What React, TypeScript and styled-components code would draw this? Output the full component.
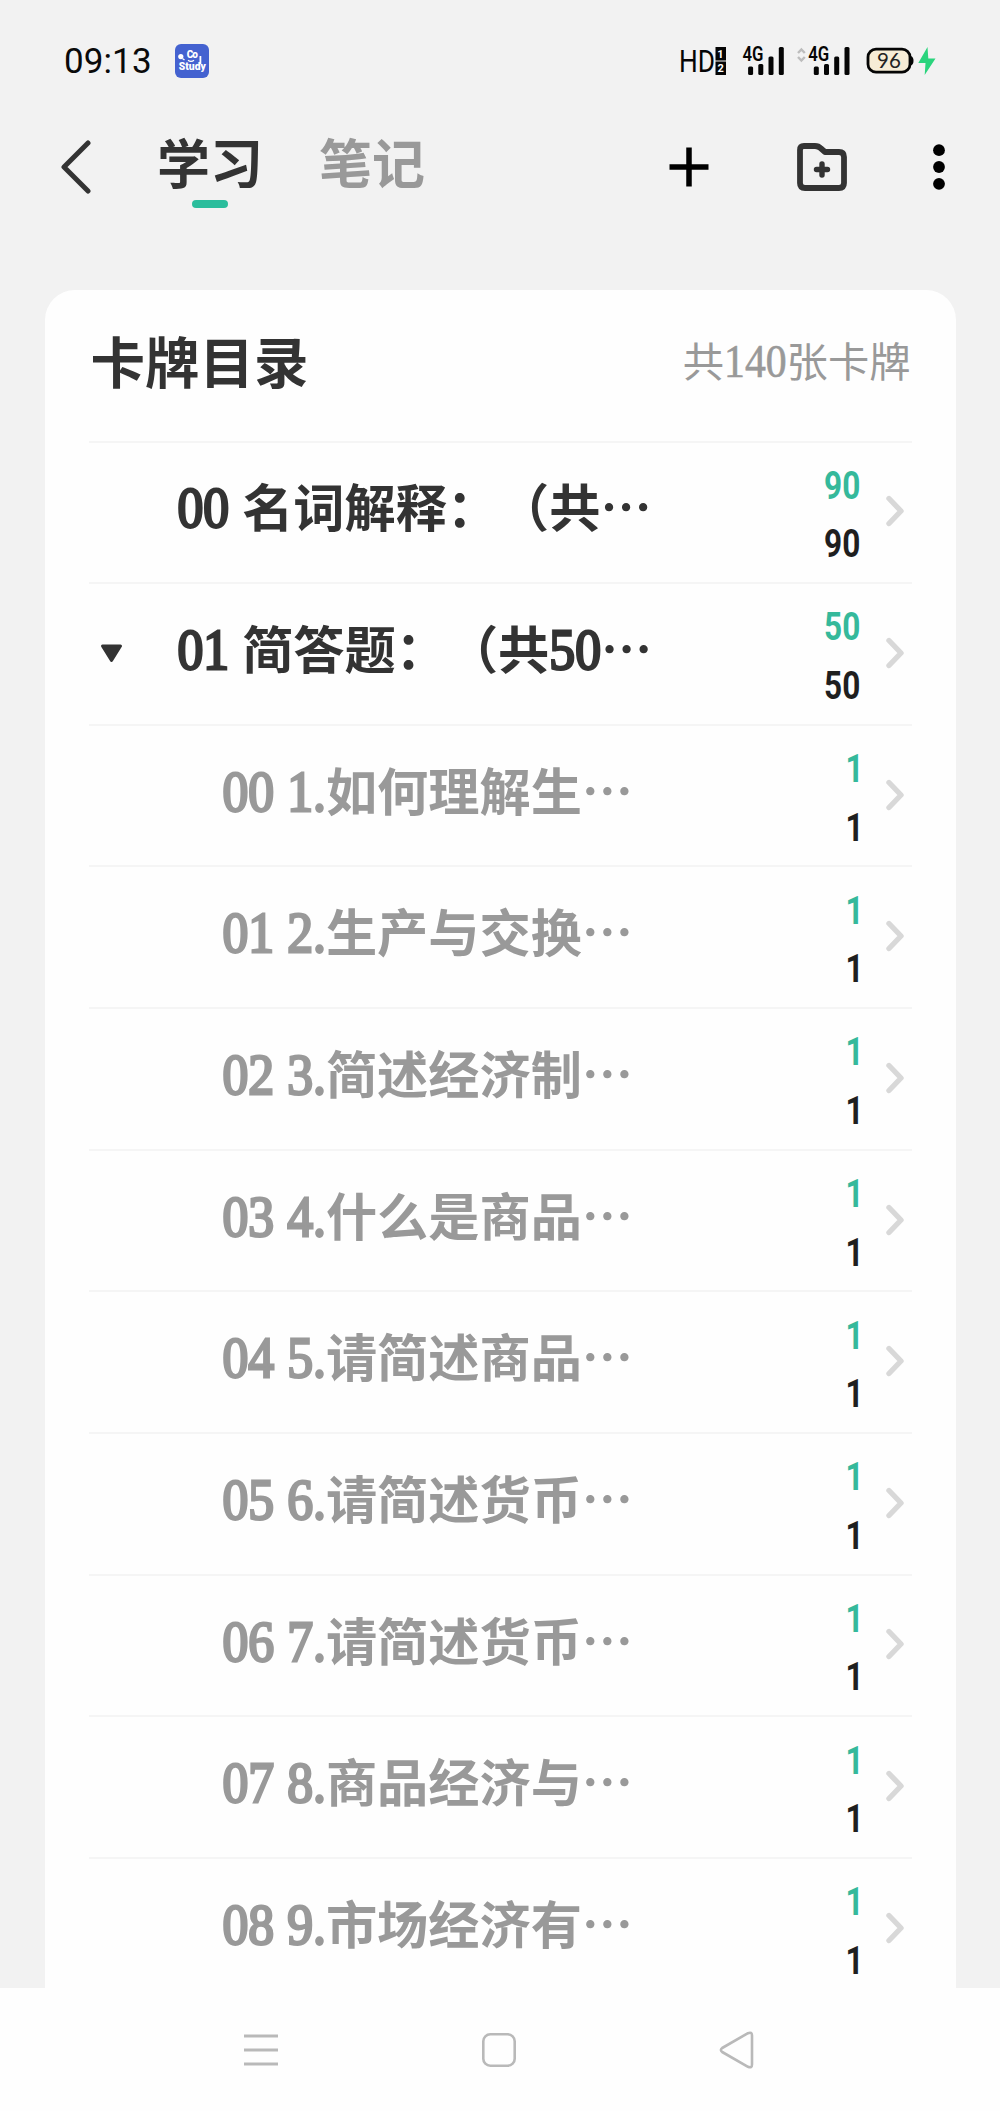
import React from "react";
import styled, { createGlobalStyle } from "styled-components";

const CJK = `"Noto Sans CJK SC", sans-serif`;

const GlobalStyle = createGlobalStyle`
  *, *::before, *::after { box-sizing: border-box; }
  body { margin: 0; background: #f2f2f2; }
`;

const Screen = styled.div`
  width: 1000px;
  height: 2111px;
  display: flex;
  flex-direction: column;
  overflow: hidden;
  background: #f2f2f2;
  font-family: ${CJK};
  text-spacing-trim: space-all;
  color: #333;
`;

const StatusBar = styled.div`
  flex: none;
  height: 122px;
  padding: 0 64px 0 64px;
  display: flex;
  align-items: center;
`;

const Clock = styled.span`
  width: 111px;
  font: 400 35px/1 Roboto, sans-serif;
  letter-spacing: 0.1px;
  color: #0a0a0a;
`;

const StatusIcons = styled.svg`
  display: block;
  margin-left: auto;
  overflow: visible;
`;

const Header = styled.header`
  flex: none;
  height: 168px;
  padding: 8px 55px 0 61px;
  display: flex;
  align-items: flex-start;
`;

const IconButton = styled.button<{ $w: number; $gap?: number }>`
  width: ${(p) => p.$w}px;
  height: 74px;
  margin: 0 0 0 ${(p) => p.$gap ?? 0}px;
  padding: 0;
  border: 0;
  background: none;
  display: flex;
  align-items: center;
  justify-content: center;
`;

const Tabs = styled.nav`
  margin-left: 65px;
  margin-right: auto;
  display: flex;
  gap: 56px;
`;

const Tab = styled.div<{ $active?: boolean }>`
  display: flex;
  flex-direction: column;
  align-items: center;
  font-size: 53px;
  font-weight: 700;
  line-height: 62px;
  color: ${(p) => (p.$active ? "#333" : "#999")};

  &::after {
    content: "";
    width: 36px;
    height: 8px;
    margin-top: 8px;
    border-radius: 4px;
    background: ${(p) => (p.$active ? "#2bbd9c" : "transparent")};
  }
`;

const Card = styled.main`
  flex: none;
  width: 911px;
  height: 1698px;
  margin-left: 44.5px;
  padding: 0 44px;
  overflow: hidden;
  border-radius: 30px 30px 0 0;
  background: #fefefe;
`;

const CardHeader = styled.div`
  height: 150.5px;
  padding: 0 1px 10px 2px;
  display: flex;
  align-items: center;
  justify-content: space-between;
`;

const CardTitle = styled.h1`
  margin: 0;
  font-size: 54.5px;
  font-weight: 700;
  line-height: 1;
`;

const CardTotal = styled.span`
  padding-top: 4px;
  font-size: 41.3px;
  line-height: 1;
  color: #999;
`;

const Latin = styled.span<{ $bold?: boolean }>`
  display: inline-block;
  font-family: "Liberation Serif", serif;
  font-size: 1.01em;
  font-weight: 400;
  line-height: 1;
  white-space: pre;
  transform: scaleY(1.12);
  transform-origin: 0 83.7%;
  -webkit-text-stroke: ${(p) => (p.$bold ? "2.5px currentColor" : "0.6px currentColor")};
`;

const Row = styled.div`
  height: 141.65px;
  border-top: 2px solid #f5f5f5;
  display: flex;
  align-items: center;
`;

const Toggle = styled.div`
  width: 46px;
  flex: none;
  display: flex;
  justify-content: center;
`;

const RowTitle = styled.div<{ $nested?: boolean }>`
  flex: 1;
  margin-left: ${(p) => (p.$nested ? 88 : 43)}px;
  padding-bottom: 13px;
  font-size: 51.2px;
  font-weight: 700;
  line-height: 60px;
  white-space: nowrap;
  color: ${(p) => (p.$nested ? "#999" : "#333")};
`;

const Counts = styled.div`
  display: flex;
  flex-direction: column;
  align-items: flex-end;
  padding-top: 6px;
  margin-right: 24px;
`;

const Count = styled.span<{ $accent?: boolean; $single?: boolean }>`
  font: 700 39.5px/58.5px Roboto, sans-serif;
  margin-right: ${(p) => (p.$single ? -3 : 0)}px;
  transform: scaleX(0.8);
  transform-origin: right center;
  color: ${(p) => (p.$accent ? "#35b99b" : "#1f1f1f")};
`;

const Chevron = styled.svg`
  display: block;
  flex: none;
  margin: 0 6px 2px 0;
`;

const NavBar = styled.footer`
  flex: none;
  height: 123px;
  padding: 0 246px 0 244px;
  display: flex;
  align-items: center;
  justify-content: space-between;
  background: #fefefe;
`;

type Entry = { title: string; count: number; nested?: boolean; open?: boolean };

const entries: Entry[] = [
  { title: "00 名词解释：（共…", count: 90 },
  { title: "01 简答题：（共50…", count: 50, open: true },
  { title: "00 1.如何理解生…", count: 1, nested: true },
  { title: "01 2.生产与交换…", count: 1, nested: true },
  { title: "02 3.简述经济制…", count: 1, nested: true },
  { title: "03 4.什么是商品…", count: 1, nested: true },
  { title: "04 5.请简述商品…", count: 1, nested: true },
  { title: "05 6.请简述货币…", count: 1, nested: true },
  { title: "06 7.请简述货币…", count: 1, nested: true },
  { title: "07 8.商品经济与…", count: 1, nested: true },
  { title: "08 9.市场经济有…", count: 1, nested: true },
];

/* Digits and ASCII punctuation use the serif face, everything else the CJK one. */
function MixedText({ text, bold }: { text: string; bold?: boolean }) {
  return (
    <>
      {text.split(/([0-9. ]+)/).map((part, i) =>
        i % 2 ? (
          <Latin key={i} $bold={bold}>
            {part}
          </Latin>
        ) : (
          part
        )
      )}
    </>
  );
}

function AppBadge() {
  return (
    <svg width="34" height="34" viewBox="0 0 34 34">
      <rect width="34" height="34" rx="6" fill="#4462d0" />
      <g fill="#fff" fontFamily="Roboto, sans-serif" fontWeight="900">
        <text x="11.8" y="14.4" fontSize="10" textLength="11">Co</text>
        <text x="3.8" y="26" fontSize="11.5" textLength="27" lengthAdjust="spacingAndGlyphs">Study</text>
      </g>
      <circle cx="5.8" cy="12.6" r="2.6" fill="#fff" />
      <path d="M7.5 14.5l2 1.5M13 16.3q3 2.2 6 0" stroke="#fff" strokeWidth="1.4" fill="none" />
      <path d="M25.4 12v8" stroke="#fff" strokeWidth="1.8" />
    </svg>
  );
}

function Signal({ x }: { x: number }) {
  return (
    <g transform={`translate(${x} 0)`} fill="#050505">
      <text x="0" y="17.4" fontFamily="Roboto, sans-serif" fontWeight="600" fontSize="19.5" textLength="21" lengthAdjust="spacingAndGlyphs">
        4G
      </text>
      <rect x="5.6" y="22.5" width="5" height="8.5" rx="1.5" />
      <rect x="15.8" y="20" width="5" height="11" rx="1.5" />
      <rect x="26" y="12.5" width="5" height="18.5" rx="1.5" />
      <rect x="36.3" y="3" width="5" height="28" rx="1.5" />
    </g>
  );
}

function StatusGlyphs() {
  return (
    <StatusIcons width="258" height="34" viewBox="-2 0 258 34">
      <text x="-1" y="28" fontFamily="Roboto, sans-serif" fontSize="31" textLength="36" lengthAdjust="spacingAndGlyphs" fill="#050505">
        HD
      </text>
      <rect x="35.5" y="3" width="10.5" height="13.5" fill="#050505" />
      <rect x="35.5" y="17.5" width="10.5" height="13.5" fill="#050505" />
      <g fill="#fff" fontFamily="Roboto, sans-serif" fontWeight="700" fontSize="11" textAnchor="middle">
        <text x="40.5" y="13.8">1</text>
        <text x="40.7" y="28.3">2</text>
      </g>
      <Signal x={62.5} />
      <path d="M118 9l3.4-3.6 3.4 3.6M118 13l3.4 3.6 3.4-3.6" fill="none" stroke="#bdbdbd" strokeWidth="2.4" />
      <Signal x={128.2} />
      <rect x="188" y="5.2" width="42" height="23" rx="8" fill="#f6ecd6" stroke="#050505" strokeWidth="2.8" />
      <path d="M231 12q2.5 1 2.5 4.7t-2.5 4.7z" fill="#050505" />
      <text x="209" y="23.9" fontFamily="Lato, sans-serif" fontSize="20.5" textAnchor="middle" fill="#222">
        96
      </text>
      <path d="M247.5 3l-9.2 16h7.2l-.8 12 10.8-16.5h-7.2z" fill="#2bd47d" />
    </StatusIcons>
  );
}

export default function App() {
  return (
    <Screen lang="zh-CN">
      <GlobalStyle />
      <StatusBar>
        <Clock>09:13</Clock>
        <AppBadge />
        <StatusGlyphs />
      </StatusBar>

      <Header>
        <IconButton $w={31} aria-label="返回">
          <svg width="31" height="56" viewBox="0 0 31 56">
            <path d="M27 4L3 28L27 52" fill="none" stroke="#333" strokeWidth="5" strokeLinecap="round" strokeLinejoin="round" />
          </svg>
        </IconButton>
        <Tabs>
          <Tab $active>学习</Tab>
          <Tab>笔记</Tab>
        </Tabs>
        <IconButton $w={40} aria-label="添加">
          <svg width="40" height="40" viewBox="0 0 40 40">
            <path d="M20 .5v39M.5 20h39" stroke="#000" strokeWidth="5.5" />
          </svg>
        </IconButton>
        <IconButton $w={50} $gap={88} aria-label="新建文件夹">
          <svg width="50" height="48" viewBox="0 0 50 48">
            <path
              d="M7 3H18Q21.5 3 24 5.5L28 9H42Q47 9 47 14V40Q47 45 42 45H8Q3 45 3 40V7Q3 3 7 3Z"
              fill="none"
              stroke="#333"
              strokeWidth="5.8"
              strokeLinejoin="round"
            />
            <path d="M25 21v11M19.5 26.5h11" stroke="#333" strokeWidth="5.4" strokeLinecap="round" />
          </svg>
        </IconButton>
        <IconButton $w={12} $gap={86} aria-label="更多">
          <svg width="12" height="46" viewBox="0 0 12 46">
            <circle cx="6" cy="6.2" r="5.9" />
            <circle cx="6" cy="23" r="5.9" />
            <circle cx="6" cy="39.8" r="5.9" />
          </svg>
        </IconButton>
      </Header>

      <Card>
        <CardHeader>
          <CardTitle>卡牌目录</CardTitle>
          <CardTotal>
            <MixedText text="共140张卡牌" />
          </CardTotal>
        </CardHeader>
        {entries.map((entry, i) => (
          <Row key={i}>
            <Toggle>
              {entry.open && (
                <svg width="23" height="19" viewBox="0 0 23 19">
                  <path d="M2.5 2H20.5L11.5 16.5Z" fill="#333" stroke="#333" strokeWidth="3" strokeLinejoin="round" />
                </svg>
              )}
            </Toggle>
            <RowTitle $nested={entry.nested}>
              <MixedText text={entry.title} bold />
            </RowTitle>
            <Counts>
              <Count $accent $single={entry.count < 10}>{entry.count}</Count>
              <Count $single={entry.count < 10}>{entry.count}</Count>
            </Counts>
            <Chevron width="21" height="32" viewBox="0 0 21 32">
              <path d="M4 3.5L16 16L4 28.5" fill="none" stroke="#d8d8d8" strokeWidth="5.4" strokeLinecap="round" strokeLinejoin="round" />
            </Chevron>
          </Row>
        ))}
      </Card>

      <NavBar>
        <svg width="34" height="36" viewBox="0 0 34 36">
          <path d="M0 4h34M0 18h34M0 32h34" stroke="#b9b9b9" strokeWidth="3" />
        </svg>
        <svg width="34" height="34" viewBox="0 0 34 34">
          <rect x="1.3" y="1.3" width="31.4" height="31.4" rx="7" fill="none" stroke="#b9b9b9" strokeWidth="2.6" />
        </svg>
        <svg width="35" height="38" viewBox="0 0 35 38">
          <path
            d="M29 2.2L3.2 17Q.6 19 3.2 21L29 35.800Q33 37.500 33 33.500V4.500Q33 .5 29 2.200Z"
            fill="none"
            stroke="#b9b9b9"
            strokeWidth="2.6"
            strokeLinejoin="round"
          />
        </svg>
      </NavBar>
    </Screen>
  );
}
